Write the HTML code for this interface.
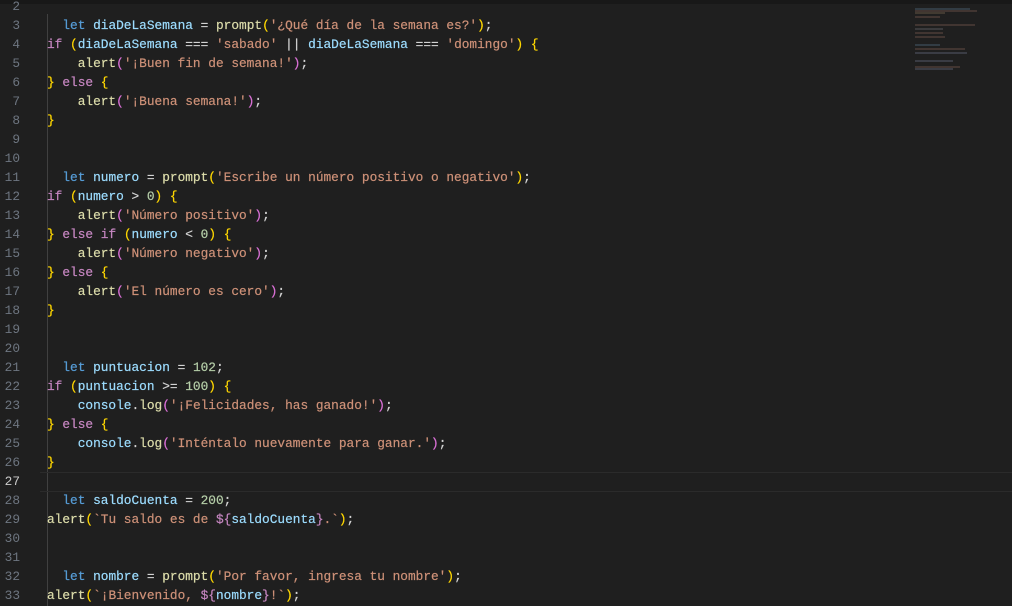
<!DOCTYPE html>
<html><head><meta charset="utf-8"><style>
html,body{margin:0;padding:0;background:#1f1f1f;width:1012px;height:606px;overflow:hidden}
.top{position:absolute;left:0;top:0;width:1012px;height:4px;background:#181818}
.ln{position:absolute;left:0;width:20px;text-align:right;font:12.8px/19px "Liberation Mono",monospace;color:#6e7681;height:19px}
.cd{position:absolute;left:47px;white-space:pre;font:12.8px/19px "Liberation Mono",monospace;color:#d4d4d4;height:19px;-webkit-text-stroke:0.2px}
.guide{position:absolute;left:47px;width:1px;background:#404040;top:14px;height:592px}
.cur{position:absolute;left:40px;right:0;top:472px;height:18px;border-top:1px solid #2b2b2b;border-bottom:1px solid #2b2b2b}
.k{color:#569cd6}.c{color:#c586c0}.v{color:#9cdcfe}.f{color:#dcdcaa}.s{color:#ce9178}.n{color:#b5cea8}.y{color:#ffd700}.p{color:#da70d6}.t{color:#c586c0}
.mm{position:absolute;left:915px;height:2px;opacity:.45}
</style></head><body>
<div class="top"></div>
<div class="guide"></div>
<div class="cur"></div>
<div class="ln" style="top:-3px">2</div>
<div class="ln" style="top:16px">3</div><div class="cd" style="top:16px">  <span class="k">let</span> <span class="v">diaDeLaSemana</span> = <span class="f">prompt</span><span class="y">(</span><span class="s">'¿Qué día de la semana es?'</span><span class="y">)</span>;</div>
<div class="ln" style="top:35px">4</div><div class="cd" style="top:35px"><span class="c">if</span> <span class="y">(</span><span class="v">diaDeLaSemana</span> === <span class="s">'sabado'</span> || <span class="v">diaDeLaSemana</span> === <span class="s">'domingo'</span><span class="y">)</span> <span class="y">{</span></div>
<div class="ln" style="top:54px">5</div><div class="cd" style="top:54px">    <span class="f">alert</span><span class="p">(</span><span class="s">'¡Buen fin de semana!'</span><span class="p">)</span>;</div>
<div class="ln" style="top:73px">6</div><div class="cd" style="top:73px"><span class="y">}</span> <span class="c">else</span> <span class="y">{</span></div>
<div class="ln" style="top:92px">7</div><div class="cd" style="top:92px">    <span class="f">alert</span><span class="p">(</span><span class="s">'¡Buena semana!'</span><span class="p">)</span>;</div>
<div class="ln" style="top:111px">8</div><div class="cd" style="top:111px"><span class="y">}</span></div>
<div class="ln" style="top:130px">9</div>
<div class="ln" style="top:149px">10</div>
<div class="ln" style="top:168px">11</div><div class="cd" style="top:168px">  <span class="k">let</span> <span class="v">numero</span> = <span class="f">prompt</span><span class="y">(</span><span class="s">'Escribe un número positivo o negativo'</span><span class="y">)</span>;</div>
<div class="ln" style="top:187px">12</div><div class="cd" style="top:187px"><span class="c">if</span> <span class="y">(</span><span class="v">numero</span> &gt; <span class="n">0</span><span class="y">)</span> <span class="y">{</span></div>
<div class="ln" style="top:206px">13</div><div class="cd" style="top:206px">    <span class="f">alert</span><span class="p">(</span><span class="s">'Número positivo'</span><span class="p">)</span>;</div>
<div class="ln" style="top:225px">14</div><div class="cd" style="top:225px"><span class="y">}</span> <span class="c">else</span> <span class="c">if</span> <span class="y">(</span><span class="v">numero</span> &lt; <span class="n">0</span><span class="y">)</span> <span class="y">{</span></div>
<div class="ln" style="top:244px">15</div><div class="cd" style="top:244px">    <span class="f">alert</span><span class="p">(</span><span class="s">'Número negativo'</span><span class="p">)</span>;</div>
<div class="ln" style="top:263px">16</div><div class="cd" style="top:263px"><span class="y">}</span> <span class="c">else</span> <span class="y">{</span></div>
<div class="ln" style="top:282px">17</div><div class="cd" style="top:282px">    <span class="f">alert</span><span class="p">(</span><span class="s">'El número es cero'</span><span class="p">)</span>;</div>
<div class="ln" style="top:301px">18</div><div class="cd" style="top:301px"><span class="y">}</span></div>
<div class="ln" style="top:320px">19</div>
<div class="ln" style="top:339px">20</div>
<div class="ln" style="top:358px">21</div><div class="cd" style="top:358px">  <span class="k">let</span> <span class="v">puntuacion</span> = <span class="n">102</span>;</div>
<div class="ln" style="top:377px">22</div><div class="cd" style="top:377px"><span class="c">if</span> <span class="y">(</span><span class="v">puntuacion</span> &gt;= <span class="n">100</span><span class="y">)</span> <span class="y">{</span></div>
<div class="ln" style="top:396px">23</div><div class="cd" style="top:396px">    <span class="v">console</span>.<span class="f">log</span><span class="p">(</span><span class="s">'¡Felicidades, has ganado!'</span><span class="p">)</span>;</div>
<div class="ln" style="top:415px">24</div><div class="cd" style="top:415px"><span class="y">}</span> <span class="c">else</span> <span class="y">{</span></div>
<div class="ln" style="top:434px">25</div><div class="cd" style="top:434px">    <span class="v">console</span>.<span class="f">log</span><span class="p">(</span><span class="s">'Inténtalo nuevamente para ganar.'</span><span class="p">)</span>;</div>
<div class="ln" style="top:453px">26</div><div class="cd" style="top:453px"><span class="y">}</span></div>
<div class="ln" style="top:472px;color:#cccccc">27</div>
<div class="ln" style="top:491px">28</div><div class="cd" style="top:491px">  <span class="k">let</span> <span class="v">saldoCuenta</span> = <span class="n">200</span>;</div>
<div class="ln" style="top:510px">29</div><div class="cd" style="top:510px"><span class="f">alert</span><span class="y">(</span><span class="s">`Tu saldo es de </span><span class="t">${</span><span class="v">saldoCuenta</span><span class="t">}</span><span class="s">.`</span><span class="y">)</span>;</div>
<div class="ln" style="top:529px">30</div>
<div class="ln" style="top:548px">31</div>
<div class="ln" style="top:567px">32</div><div class="cd" style="top:567px">  <span class="k">let</span> <span class="v">nombre</span> = <span class="f">prompt</span><span class="y">(</span><span class="s">'Por favor, ingresa tu nombre'</span><span class="y">)</span>;</div>
<div class="ln" style="top:586px">33</div><div class="cd" style="top:586px"><span class="f">alert</span><span class="y">(</span><span class="s">`¡Bienvenido, </span><span class="t">${</span><span class="v">nombre</span><span class="t">}</span><span class="s">!`</span><span class="y">)</span>;</div>
<div class="mm" style="top:8px;width:55px;background:#4a6070"></div>
<div class="mm" style="top:10px;width:62px;background:#6a5048"></div>
<div class="mm" style="top:12px;width:30px;background:#6a5a48"></div>
<div class="mm" style="top:16px;width:25px;background:#6a5048"></div>
<div class="mm" style="top:24px;width:60px;background:#6a5048"></div>
<div class="mm" style="top:28px;width:28px;background:#5a5a60"></div>
<div class="mm" style="top:32px;width:28px;background:#6a5048"></div>
<div class="mm" style="top:36px;width:30px;background:#6a5048"></div>
<div class="mm" style="top:44px;width:25px;background:#4a6070"></div>
<div class="mm" style="top:48px;width:50px;background:#6a5048"></div>
<div class="mm" style="top:52px;width:52px;background:#5a6070"></div>
<div class="mm" style="top:60px;width:38px;background:#5a6070"></div>
<div class="mm" style="top:66px;width:45px;background:#6a5048"></div>
<div class="mm" style="top:68px;width:38px;background:#5a6070"></div>
</body></html>
